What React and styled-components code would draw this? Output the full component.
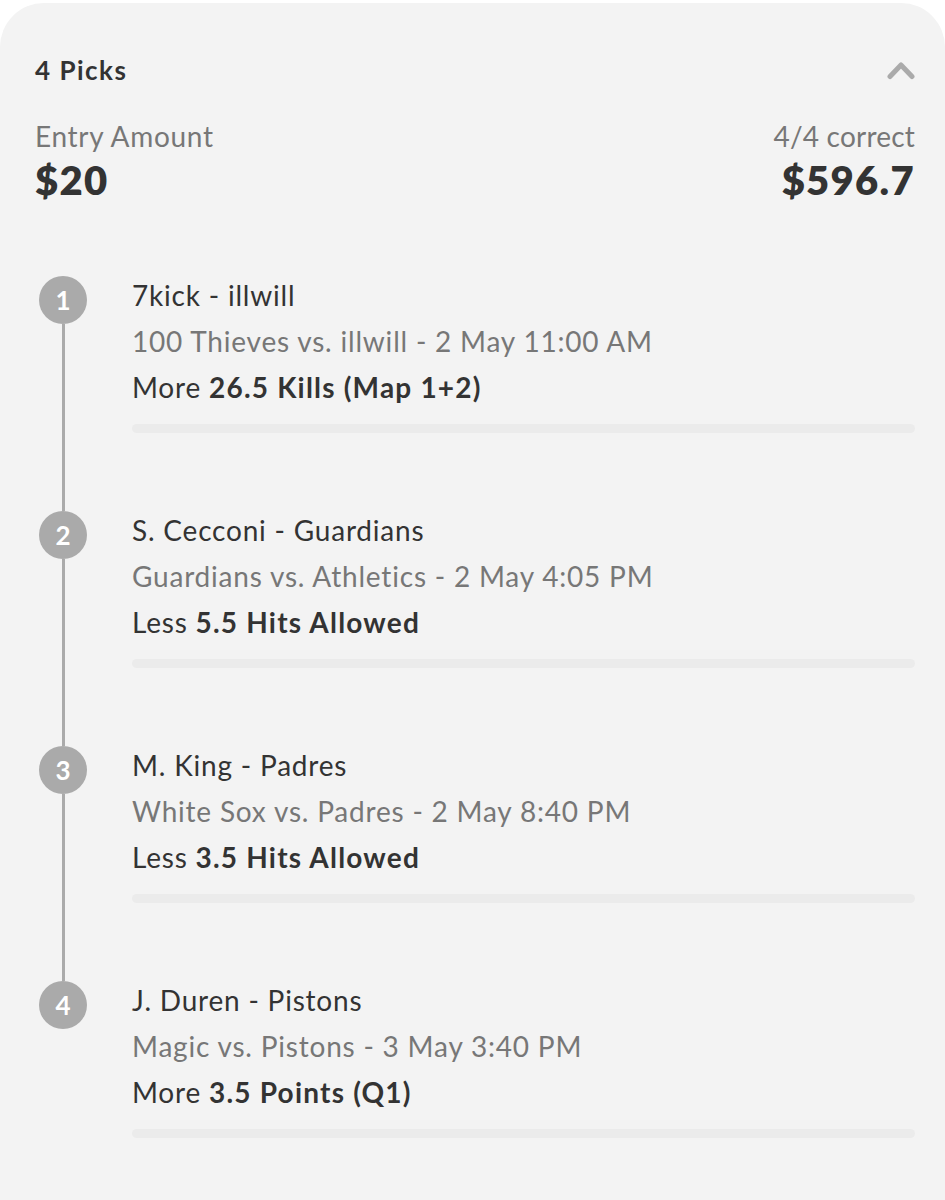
import React from 'react';
import styled, { createGlobalStyle } from 'styled-components';

const GlobalStyle = createGlobalStyle`
  body {
    margin: 0;
    background: #ffffff;
    font-family: Lato, "Open Sans", sans-serif;
  }
`;

const Card = styled.section`
  margin-top: 3px;
  background: #f3f3f3;
  border-radius: 44px 44px 0 0;
  padding: 50px 30px 62px 35px;
  color: #333333;
`;

const HeaderRow = styled.div`
  display: flex;
  justify-content: space-between;
  align-items: center;
  height: 34px;
`;

const Title = styled.h2`
  margin: 0;
  font-size: 26px;
  line-height: 34px;
  font-weight: 700;
  letter-spacing: 1.5px;
  color: #333;
`;

const Chevron = styled.svg`
  width: 28px;
  height: 19px;
  display: block;
`;

const Amounts = styled.div`
  display: flex;
  justify-content: space-between;
  margin-top: 32px;
`;

const AmountBlock = styled.div`
  display: flex;
  flex-direction: column;
  align-items: ${(p) => (p.$right ? 'flex-end' : 'flex-start')};
`;

const Label = styled.span`
  font-size: 28px;
  line-height: 34px;
  letter-spacing: ${(p) => (p.$tight ? '0.2px' : '0.7px')};
  color: #777;
`;

const Value = styled.span`
  font-size: 40px;
  line-height: 44px;
  font-weight: 800;
  letter-spacing: 1.3px;
  color: #333;
  margin-top: 5px;
`;

const PickList = styled.ol`
  list-style: none;
  margin: 74px 0 0 4px;
  padding: 0;
`;

const PickRow = styled.li`
  display: flex;
  gap: 45px;
`;

const Rail = styled.div`
  width: 48px;
  flex-shrink: 0;
  display: flex;
  flex-direction: column;
  align-items: center;
`;

const Bubble = styled.div`
  width: 48px;
  height: 48px;
  border-radius: 50%;
  background: #aaaaaa;
  color: #ffffff;
  font-size: 26px;
  font-weight: 700;
  display: flex;
  align-items: center;
  justify-content: center;
  flex-shrink: 0;
`;

const Connector = styled.div`
  width: 3px;
  flex: 1;
  background: #aaaaaa;
  visibility: ${(p) => (p.$hidden ? 'hidden' : 'visible')};
`;

const PickBody = styled.div`
  flex: 1;
  margin-top: -4px;
  padding-bottom: ${(p) => (p.$last ? '0' : '78px')};
`;

const Line = styled.div`
  font-size: 28px;
  line-height: 46px;
  letter-spacing: 0.8px;
  color: ${(p) => (p.$muted ? '#777777' : '#333333')};
  white-space: nowrap;
`;

const Strong = styled.span`
  font-weight: 700;
  letter-spacing: 1.2px;
`;

const Divider = styled.div`
  margin-top: 14px;
  height: 9px;
  border-radius: 5px;
  background: #ebebeb;
`;

const picks = [
  {
    name: '7kick - illwill',
    game: '100 Thieves vs. illwill - 2 May 11:00 AM',
    side: 'More',
    line: '26.5 Kills (Map 1+2)',
  },
  {
    name: 'S. Cecconi - Guardians',
    game: 'Guardians vs. Athletics - 2 May 4:05 PM',
    side: 'Less',
    line: '5.5 Hits Allowed',
  },
  {
    name: 'M. King - Padres',
    game: 'White Sox vs. Padres - 2 May 8:40 PM',
    side: 'Less',
    line: '3.5 Hits Allowed',
  },
  {
    name: 'J. Duren - Pistons',
    game: 'Magic vs. Pistons - 3 May 3:40 PM',
    side: 'More',
    line: '3.5 Points (Q1)',
  },
];

const App = () => {
  return (
    <>
      <GlobalStyle />
      <Card>
        <HeaderRow>
          <Title>4 Picks</Title>
          <Chevron viewBox="0 0 28 19" fill="none">
            <polyline
              points="3,15.5 14,4 25,15.5"
              stroke="#aaaaaa"
              strokeWidth="5"
              strokeLinecap="round"
              strokeLinejoin="round"
            />
          </Chevron>
        </HeaderRow>

        <Amounts>
          <AmountBlock>
            <Label>Entry Amount</Label>
            <Value>$20</Value>
          </AmountBlock>
          <AmountBlock $right>
            <Label $tight>4/4 correct</Label>
            <Value>$596.7</Value>
          </AmountBlock>
        </Amounts>

        <PickList>
          {picks.map((pick, i) => {
            const last = i === picks.length - 1;
            return (
              <PickRow key={pick.name}>
                <Rail>
                  <Bubble>{i + 1}</Bubble>
                  <Connector $hidden={last} />
                </Rail>
                <PickBody $last={last}>
                  <Line>{pick.name}</Line>
                  <Line $muted>{pick.game}</Line>
                  <Line>
                    {pick.side} <Strong>{pick.line}</Strong>
                  </Line>
                  <Divider />
                </PickBody>
              </PickRow>
            );
          })}
        </PickList>
      </Card>
    </>
  );
};

export default App;
